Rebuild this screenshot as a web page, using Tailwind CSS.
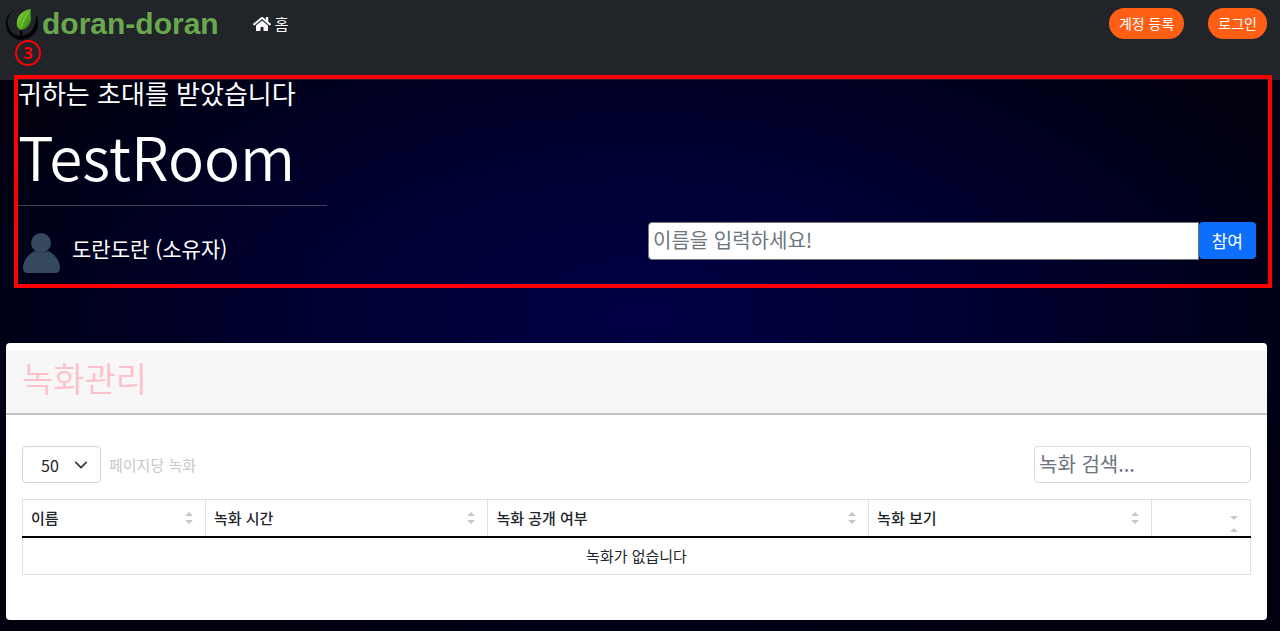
<!DOCTYPE html>
<html lang="ko">
<head>
  <meta charset="UTF-8" />
  <meta name="viewport" content="width=device-width, initial-scale=1" />
  <title>doran-doran</title>
  <script src="https://cdn.jsdelivr.net/npm/@tailwindcss/browser@4"></script>
</head>
<body class="min-h-screen bg-[#00000f] bg-[radial-gradient(ellipse_at_center,#000044_0%,#00002e_42%,#00000f_80%)] font-['Noto_Sans_CJK_KR',sans-serif] text-[#212529]">

  <!-- Top bar -->
  <header class="flex h-20 items-start justify-between bg-[#212529] pl-1 pr-[13px] pt-2">
    <nav class="flex items-center">
      <a href="#" class="flex h-8 items-center gap-1 font-['Liberation_Sans',sans-serif] text-[30px] font-bold leading-8 text-[#6aa84f]">
        <svg class="h-9 w-[34px]" viewBox="0 0 34 36" fill="none">
          <defs>
            <linearGradient id="leaf" x1="0" y1="0" x2="1" y2="1">
              <stop offset="0" stop-color="#a4dc4a" />
              <stop offset="0.5" stop-color="#55b01e" />
              <stop offset="1" stop-color="#2a7a0c" />
            </linearGradient>
          </defs>
          <!-- broken ring, thicker at the bottom -->
          <path d="M10 4C3 8 0 16 3 24c4 10 17 13 25 6 7-6 8-14 4-21 0 8-2 14-7 18-7 5-17 3-20-5C2 16 4 9 10 4Z" fill="#050505" />
          <path d="M17 33c0-5 0-9 1-14" stroke="#050505" stroke-width="2" />
          <path d="M27 3c-8 1-13 6-14 12-1 5 1 8 4 9 6-1 9-5 10-10 0-4-1-7 0-11Z" fill="url(#leaf)" />
          <path d="M25 6c-4 5-6 9-8 16" stroke="#8fd048" stroke-width="1" />
        </svg>
        doran-doran
      </a>
      <a href="#" class="ml-[34px] flex items-center gap-1 text-[15px] leading-6 text-white">
        <svg class="h-4 w-[18px]" viewBox="0 0 576 512" fill="currentColor">
          <path d="M280.400 148.300L96 300.100V464a16 16 0 0 0 16 16l112.100-.3a16 16 0 0 0 15.900-16V368a16 16 0 0 1 16-16h64a16 16 0 0 1 16 16v95.600a16 16 0 0 0 16 16.100L464 480a16 16 0 0 0 16-16V300L295.700 148.300a12.200 12.200 0 0 0-15.300 0zM571.600 251.500L488 182.600V44a12 12 0 0 0-12-12h-56a12 12 0 0 0-12 12v72.600L318.500 43a48 48 0 0 0-61 0L4.300 251.500a12 12 0 0 0-1.600 16.900l25.500 31a12 12 0 0 0 16.900 1.600l235.300-193.700a12.200 12.200 0 0 1 15.300 0L530.900 301a12 12 0 0 0 16.900-1.600l25.500-31a12 12 0 0 0-1.700-16.900z" />
        </svg>
        홈
      </a>
    </nav>
    <div class="flex gap-6 text-sm leading-5 text-white">
      <button class="h-[31px] rounded-full bg-[#ff5f15] px-2.5 pb-0.5">계정 등록</button>
      <button class="h-[31px] rounded-full bg-[#ff5f15] px-2.5 pb-0.5">로그인</button>
    </div>
  </header>

  <!-- Invitation, framed and marked as step 3 -->
  <main>
    <section class="relative -mt-[5px] ml-[14px] mr-2 h-[213px] border-4 border-[#ff0000] text-white">
      <span class="absolute -top-[39px] -left-[3px] flex size-[26px] items-center justify-center rounded-full border-2 border-[#ff0000] font-['Open_Sans',sans-serif] text-base font-bold text-[#ff0000]">3</span>
      <h3 class="text-[26px] leading-7">귀하는 초대를 받았습니다</h3>
      <h1 class="mt-2 w-[309px] border-b border-white/25 pb-2.5 text-[60px] font-[350] leading-20">TestRoom</h1>
      <div class="mt-4 flex items-start">
        <div class="flex w-1/2 items-start gap-3 pl-1 pt-2.5">
          <svg class="h-[42px] w-[38px]" viewBox="0 0 38 42" fill="#34495e">
            <circle cx="19" cy="11" r="10" />
            <path d="M13 19C6 22 1 29 1 36c0 3 2 5 5 5h27c3 0 5-2 5-5 0-7-5-14-12-17-4 2-9 2-13 0Z" />
          </svg>
          <h5 class="text-[21px] leading-8">도란도란 (소유자)</h5>
        </div>
        <form class="flex grow pl-[5px] pr-3">
          <input type="text" aria-label="이름" placeholder="이름을 입력하세요!" class="h-[38px] min-w-0 grow rounded-l border border-[#767676] bg-white px-1 pb-1 text-xl text-[#212529] placeholder:text-[#6c757d]" />
          <button type="button" class="h-[37px] rounded bg-[#0d6efd] px-[13px] text-[17px]">참여</button>
        </form>
      </div>
    </section>

    <!-- Recordings -->
    <section class="ml-[6px] mr-[13px] mt-[55px] rounded bg-white pb-[45px] pt-2">
      <div class="border-b-2 border-[#c4c4c4] bg-[#f7f7f7] px-4 pb-2">
        <h4 class="h-[54px] text-[34px] font-[350] leading-[54px] text-[#ffc0cb]">녹화관리</h4>
      </div>
      <div class="px-4 pt-[31px]">
        <div class="mb-4 flex items-center justify-between">
          <div class="flex items-center gap-2">
            <div class="relative">
              <select id="per-page" class="h-[37px] w-[79px] appearance-none rounded border border-[#ced4da] bg-white pl-[18px] text-base text-[#212529]">
                <option>50</option>
              </select>
              <svg class="pointer-events-none absolute right-[13px] top-3 size-3.5" viewBox="0 0 16 16" fill="none" stroke="#343a40" stroke-width="2" stroke-linecap="round" stroke-linejoin="round">
                <path d="M2 5l6 6 6-6" />
              </svg>
            </div>
            <label for="per-page" class="text-[15px] leading-5 text-[#c8c8c8]">페이지당 녹화</label>
          </div>
          <input type="search" aria-label="녹화 검색" placeholder="녹화 검색..." class="h-[37px] w-[217px] rounded-sm border border-[#d9d9d9] bg-white px-1 pb-0.5 text-xl placeholder:text-[#6c757d]" />
        </div>
        <table class="w-full table-fixed border-collapse border border-[#dee2e6] text-[15px] leading-5">
          <colgroup>
            <col class="w-[14.9%]" />
            <col class="w-[23%]" />
            <col class="w-[31%]" />
            <col class="w-[23%]" />
            <col class="w-[8.1%]" />
          </colgroup>
          <thead>
            <tr class="h-[37px] border-b-2 border-black text-left">
              <th class="border-x border-[#dee2e6] px-2 font-medium">
                <div class="flex items-center justify-between pr-1">이름
                  <svg class="h-3 w-2" viewBox="0 0 8 12" fill="#c8c8c8"><path d="M4 0l4 4H0zM4 12l4-4H0z" /></svg>
                </div>
              </th>
              <th class="border-x border-[#dee2e6] px-2 font-medium">
                <div class="flex items-center justify-between pr-1">녹화 시간
                  <svg class="h-3 w-2" viewBox="0 0 8 12" fill="#c8c8c8"><path d="M4 0l4 4H0zM4 12l4-4H0z" /></svg>
                </div>
              </th>
              <th class="border-x border-[#dee2e6] px-2 font-medium">
                <div class="flex items-center justify-between pr-1">녹화 공개 여부
                  <svg class="h-3 w-2" viewBox="0 0 8 12" fill="#c8c8c8"><path d="M4 0l4 4H0zM4 12l4-4H0z" /></svg>
                </div>
              </th>
              <th class="border-x border-[#dee2e6] px-2 font-medium">
                <div class="flex items-center justify-between pr-1">녹화 보기
                  <svg class="h-3 w-2" viewBox="0 0 8 12" fill="#c8c8c8"><path d="M4 0l4 4H0zM4 12l4-4H0z" /></svg>
                </div>
              </th>
              <th class="border-x border-[#dee2e6] px-2 align-bottom">
                <div class="flex justify-end pb-1 pr-1">
                  <svg class="h-4 w-2" viewBox="0 0 8 16" fill="#c8c8c8"><path d="M4 4l4-4H0zM4 12l4 4H0z" /></svg>
                </div>
              </th>
            </tr>
          </thead>
          <tbody>
            <tr class="h-[38px]">
              <td colspan="5" class="text-center">녹화가 없습니다</td>
            </tr>
          </tbody>
        </table>
      </div>
    </section>
  </main>
</body>
</html>
